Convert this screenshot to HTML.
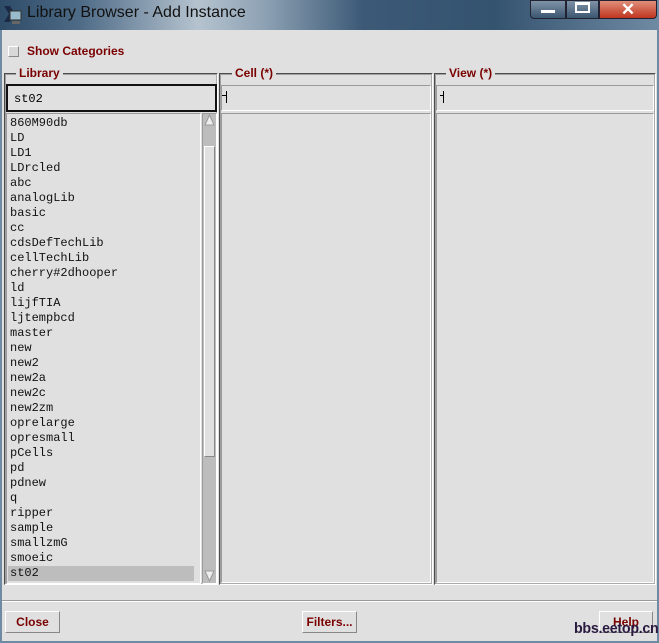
<!DOCTYPE html>
<html><head><style>
*{margin:0;padding:0;box-sizing:border-box}
body{width:659px;height:643px;overflow:hidden;background:#e0e0e0;position:relative;font-family:"Liberation Sans",sans-serif}
.abs{position:absolute}
.title{left:0;top:0;width:659px;height:30px;background:linear-gradient(90deg,#2e4b68 0%,#4d6a86 12%,#b5c3cf 30%,#8ea2b4 40%,#3c5a77 55%,#34536f 75%,#6f8aa3 100%)}
.ttext{left:27px;top:4px;font-size:16px;color:#111}
.lbl{color:#7a0000;font-weight:bold;font-size:12px;background:#e0e0e0;padding:0 3px}
.grp{border:2px groove #f4f4f4;border-color:#a0a0a0 #fff #fff #a0a0a0}
.list{font-family:"Liberation Mono",monospace;font-size:12px;line-height:15px;color:#111}
.btn{height:22px;border:1px solid;border-color:#fff #888 #888 #fff;background:#e0e0e0;color:#7a0000;font-weight:bold;font-size:12px;text-align:center;line-height:20px}
.in{border:1px solid;border-color:#9a9a9a #fff #fff #9a9a9a}
</style></head><body>
<div class="abs title"></div>
<svg class="abs" style="left:2px;top:4px" width="22" height="22"><path d="M2 2h6l5 8-5 8H2l5-8z" fill="#1a2a44"/><rect x="8" y="7" width="11" height="9" fill="#9bc" stroke="#333"/><rect x="10" y="17" width="8" height="3" fill="#666"/></svg>
<div class="abs ttext">Library Browser - Add Instance</div>
<div class="abs" style="left:530px;top:0;width:36px;height:19px;background:linear-gradient(#7f93a7,#3b5670);border:1px solid #223;border-radius:0 0 0 4px"></div>
<div class="abs" style="left:541px;top:10px;width:14px;height:3px;background:#fff"></div>
<div class="abs" style="left:566px;top:0;width:33px;height:19px;background:linear-gradient(#7f93a7,#3b5670);border:1px solid #223"></div>
<div class="abs" style="left:575px;top:2px;width:15px;height:11px;border:2px solid #fff;border-top-width:3px"></div>
<div class="abs" style="left:599px;top:0;width:58px;height:19px;background:linear-gradient(#e0907a,#c03520);border:1px solid #223;border-radius:0 0 4px 0;color:#fff;font-weight:bold;font-size:17px;text-align:center;line-height:17px">✕</div>
<div class="abs" style="left:0;top:30px;width:659px;height:613px;border:2px solid #6f8aa3;border-top:0"></div>
<div class="abs" style="left:8px;top:46px;width:11px;height:11px;background:#d8d8d8;border:1px solid;border-color:#fff #888 #888 #fff"></div>
<div class="abs lbl" style="left:24px;top:44px">Show Categories</div>

<div class="abs grp" style="left:4px;top:73px;width:214px;height:512px"></div>
<div class="abs lbl" style="left:16px;top:66px">Library</div>
<div class="abs" style="left:6px;top:84px;width:211px;height:28px;border:2px solid #111;font-family:'Liberation Mono',monospace;font-size:12px;padding:6px 6px;background:#e0e0e0">st02</div>
<div class="abs in" style="left:6px;top:113px;width:195px;height:471px"></div>
<div class="abs list" style="left:10px;top:116px;width:185px">
860M90db<br>LD<br>LD1<br>LDrcled<br>abc<br>analogLib<br>basic<br>cc<br>cdsDefTechLib<br>cellTechLib<br>cherry#2dhooper<br>ld<br>lijfTIA<br>ljtempbcd<br>master<br>new<br>new2<br>new2a<br>new2c<br>new2zm<br>oprelarge<br>opresmall<br>pCells<br>pd<br>pdnew<br>q<br>ripper<br>sample<br>smallzmG<br>smoeic<br><div style="background:#bdbdbd;margin-left:-2px;padding-left:2px;width:186px">st02</div></div>
<div class="abs" style="left:202px;top:113px;width:15px;height:471px;background:#bdbdbd;border:1px solid;border-color:#9a9a9a #fff #fff #9a9a9a"></div>
<div class="abs" style="left:204px;top:146px;width:11px;height:311px;background:#e0e0e0;border:1px solid;border-color:#fff #888 #888 #fff"></div>
<svg class="abs" style="left:204px;top:114px" width="11" height="12"><path d="M5.5 1L10 11H1z" fill="#eee" stroke="#999"/></svg>
<svg class="abs" style="left:204px;top:570px" width="11" height="12"><path d="M5.5 11L10 1H1z" fill="#eee" stroke="#999"/></svg>

<div class="abs grp" style="left:219px;top:73px;width:214px;height:512px"></div>
<div class="abs lbl" style="left:232px;top:66px">Cell (*)</div>
<div class="abs in" style="left:221px;top:85px;width:210px;height:26px"></div>
<div class="abs" style="left:226px;top:91px;width:1px;height:12px;background:#000"></div>
<div class="abs" style="left:222px;top:95px;width:4px;height:1px;background:#000"></div>
<div class="abs in" style="left:221px;top:113px;width:210px;height:470px"></div>

<div class="abs grp" style="left:434px;top:73px;width:222px;height:512px"></div>
<div class="abs lbl" style="left:446px;top:66px">View (*)</div>
<div class="abs in" style="left:436px;top:85px;width:218px;height:26px"></div>
<div class="abs" style="left:443px;top:91px;width:1px;height:12px;background:#000"></div>
<div class="abs" style="left:440px;top:95px;width:4px;height:1px;background:#000"></div>
<div class="abs in" style="left:436px;top:113px;width:218px;height:470px"></div>

<div class="abs" style="left:2px;top:600px;width:655px;height:2px;border-top:1px solid #999;border-bottom:1px solid #fff"></div>
<div class="abs btn" style="left:5px;top:611px;width:55px">Close</div>
<div class="abs btn" style="left:302px;top:611px;width:55px">Filters...</div>
<div class="abs btn" style="left:599px;top:611px;width:54px">Help</div>
<div class="abs" style="left:574px;top:620px;font-family:'Liberation Sans',sans-serif;font-weight:bold;font-size:15px;color:#2a1a40;letter-spacing:-0.3px;transform:scaleX(0.95);transform-origin:left">bbs.eetop.cn</div>
</body></html>
